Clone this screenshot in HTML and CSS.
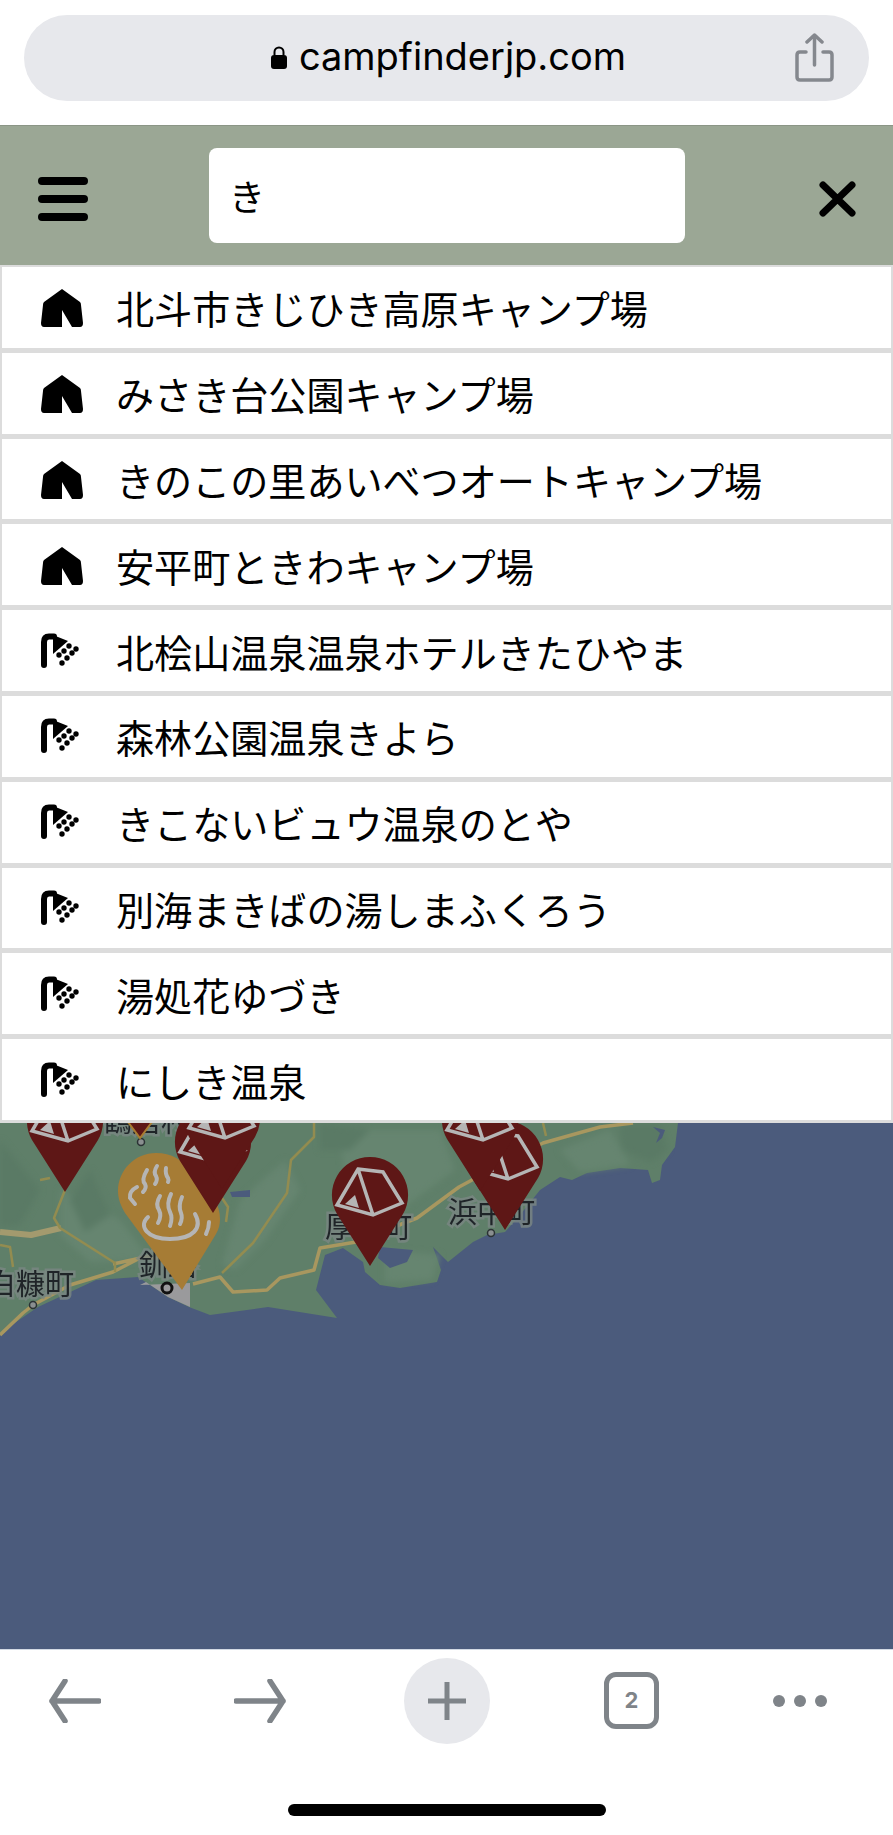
FILE: index.html
```html
<!DOCTYPE html>
<html lang="ja">
<head>
  <meta charset="UTF-8" />
  <meta name="viewport" content="width=device-width, initial-scale=1.0"/>
  <title>campfinderjp.com</title>
  <link rel="stylesheet" href="styles.css">
</head>
<body>

  <!-- shared icons -->
  <svg class="defs" width="0" height="0">
    <symbol id="i-camp" viewBox="0 0 42 38">
      <path d="M21 0 L39 13 Q40 14 40 16 L42 34 Q42 38 39 38 L31 38 L21 21 L21 38 L3 38 Q0 38 0 34 L2 16 Q2 14 3 13 Z"/>
    </symbol>
    <symbol id="i-onsen" viewBox="0 0 42 38">
      <path class="pipe" d="M3 32 V9 Q3 3.5 8 3.5 H13"/>
      <path d="M12 2 L27 8 L12 21 Z"/>
      <circle cx="28" cy="13" r="2.7"/><circle cx="35" cy="16" r="2.7"/>
      <circle cx="23" cy="18" r="2.7"/><circle cx="31" cy="20" r="2.7"/>
      <circle cx="18" cy="22" r="2.7"/><circle cx="26" cy="25" r="2.7"/>
      <circle cx="21" cy="30" r="2.7"/>
    </symbol>
    <symbol id="tent" viewBox="0 0 76 60" overflow="visible">
      <path class="tent-line" d="M21 2 L46 5 L65 36 L36 48 L0 38 Z M21 2 L36 48"/>
      <path class="tent-door" d="M8 37 L18 28 L22 41 Z"/>
    </symbol>
  </svg>

  <!-- browser address bar -->
  <div class="topbar">
    <div class="urlbar">
      <div class="url">
        <svg class="lock" viewBox="0 0 16 23"><path d="M3.5 9 V6 a4.5 4.5 0 0 1 9 0 V9" fill="none" stroke="#000" stroke-width="2"/><rect x="0" y="9" width="16" height="14" rx="3"/></svg>
        <span>campfinderjp.com</span>
      </div>
      <svg class="share" viewBox="0 0 39 49"><path d="M11 19 H5 Q2 19 2 22 V44 Q2 47 5 47 H34 Q37 47 37 44 V22 Q37 19 34 19 H28 M19.5 32 V2 M12 9 L19.5 2 L27 9" fill="none" stroke="#85888e" stroke-width="3.5" stroke-linecap="round" stroke-linejoin="round"/></svg>
    </div>
  </div>

  <!-- site header with search -->
  <header class="header">
    <div class="menu"><span></span><span></span><span></span></div>
    <div class="search">き</div>
    <svg class="close" viewBox="0 0 37 36"><path d="M4 4 L33 32 M33 4 L4 32" stroke="#000" stroke-width="7" stroke-linecap="round"/></svg>
  </header>

  <!-- suggestions -->
  <ul class="results">
    <li><svg class="ico"><use href="#i-camp"/></svg>北斗市きじひき高原キャンプ場</li>
    <li><svg class="ico"><use href="#i-camp"/></svg>みさき台公園キャンプ場</li>
    <li><svg class="ico"><use href="#i-camp"/></svg>きのこの里あいべつオートキャンプ場</li>
    <li><svg class="ico"><use href="#i-camp"/></svg>安平町ときわキャンプ場</li>
    <li><svg class="ico"><use href="#i-onsen"/></svg>北桧山温泉温泉ホテルきたひやま</li>
    <li><svg class="ico"><use href="#i-onsen"/></svg>森林公園温泉きよら</li>
    <li><svg class="ico"><use href="#i-onsen"/></svg>きこないビュウ温泉のとや</li>
    <li><svg class="ico"><use href="#i-onsen"/></svg>別海まきばの湯しまふくろう</li>
    <li><svg class="ico"><use href="#i-onsen"/></svg>湯処花ゆづき</li>
    <li><svg class="ico"><use href="#i-onsen"/></svg>にしき温泉</li>
  </ul>

  <!-- map, coordinates are page pixels -->
  <div class="map">
    <svg viewBox="0 1123 893 526" width="893" height="526">
      <rect class="sea" x="0" y="1123" width="893" height="526"/>

      <path class="land" d="M0 1123 H678 L675 1147 L662 1165 L660 1180 L652 1183 L648 1170 L620 1168 L587 1173 L572 1180 L560 1177 L540 1190 L520 1215 L505 1232 L487 1235 L473 1242 L448 1262 L433 1247 L441 1270 L437 1282 L400 1288 L380 1285 L365 1272 L363 1262 L343 1248 L325 1255 L316 1290 L337 1318 L268 1307 L210 1315 L189 1307 L168 1297 L138 1277 L96 1280 L38 1307 L0 1333 Z"/>
      <g class="patches">
        <path class="land-light" d="M60 1190 L120 1220 L150 1260 L90 1262 L60 1235 Z M240 1200 L285 1160 L300 1190 L265 1240 L235 1270 L222 1265 Z M340 1130 L440 1130 L455 1170 L400 1210 L345 1180 Z M560 1150 L610 1130 L630 1165 L580 1172 Z M385 1250 L440 1255 L432 1280 L385 1282 Z"/>
        <path class="land-dark" d="M0 1140 L40 1190 L20 1225 L0 1228 Z M90 1170 L110 1215 L85 1232 L70 1200 Z M620 1125 L660 1125 L668 1150 L650 1162 L622 1150 Z M320 1123 L370 1130 L350 1150 L320 1150 Z"/>
      </g>
      <path class="sea" d="M380 1247 L413 1250 L407 1262 L390 1268 L378 1258 Z M230 1192 L250 1190 L250 1197 L232 1197 Z M653 1127 L665 1130 L662 1138 L656 1143 L660 1133 Z"/>
      <path class="town" d="M140 1285 L190 1283 L190 1307 L168 1297 L146 1282 Z"/>

      <path class="road" d="M0 1335 L23 1313 L33 1305 L70 1285 L113 1272 L140 1258 L165 1258 M113 1264 L150 1256 M193 1284 L220 1277 L233 1292 L267 1290 L280 1278 L314 1270 L320 1248 L356 1242 L417 1218 L459 1187 L500 1165 L543 1143 L600 1127 L633 1123"/>
      <path class="road-wide" d="M0 1232 L31 1235 L61 1228"/>
      <path class="road-thin" d="M65 1190 L54 1218 L60 1228 L115 1263 L115 1272 M314 1123 L314 1137 L291 1160 L287 1193 L253 1243 L222 1273 M220 1195 L228 1207 L226 1222 M0 1245 L10 1247 L13 1267 M543 1123 L546 1136 M40 1180 L50 1178"/>

      <text class="place" x="-13" y="1295">白糠町</text>
      <text class="place" x="103" y="1132">鶴居村</text>
      <text class="place" x="139" y="1276">釧路</text>
      <text class="place" x="325" y="1238">厚岸町</text>
      <text class="place" x="448" y="1223">浜中町</text>

      <circle class="dot" cx="33" cy="1305" r="3.5"/>
      <circle class="dot" cx="141" cy="1142" r="3.5"/>
      <circle class="dot" cx="491" cy="1233" r="3.5"/>
      <circle class="dot-city" cx="167" cy="1288" r="5"/>

      <!-- pins -->
      <path class="pin-small" d="M128 1122 H152 L140 1138 Z"/>
      <path class="pin-onsen" d="M156 1153 C135 1153 118 1170 118 1191 C118 1199 121 1206 125 1213 L182 1290 L216 1234 C219 1229 220 1224 220 1219 C220 1205 212 1192 200 1186 L190 1172 C184 1160 171 1153 156 1153 Z"/>
      <g class="onsen-mark">
        <path d="M147 1170 Q141 1180 145 1184 Q147 1188 143 1192 M157 1166 Q153 1172 156 1176 Q158 1180 155 1184 M166 1168 Q165 1174 168 1178 Q169 1180 168 1182"/>
        <path d="M137 1187 Q129 1191 130 1198 L135 1204"/>
        <path d="M160 1196 Q155 1204 159 1210 Q162 1216 158 1223 M171 1194 Q166 1204 170 1212 Q173 1218 170 1226 M182 1197 Q178 1206 181 1213 Q183 1218 180 1224"/>
        <path d="M148 1217 C138 1226 147 1239 170 1239 C193 1239 203 1228 195 1214"/>
        <path d="M209 1222 Q209 1228 206 1234"/>
      </g>

      <g class="pin-red">
        <path d="M370 1157 a38 38 0 0 1 33 57 L370 1266 L337 1214 a38 38 0 0 1 33 -57 Z"/>
      </g>
      <use href="#tent" x="337" y="1167" width="76" height="60"/>

      <path class="pin-red" d="M505 1121 a38 38 0 0 1 33 57 L505 1230 L472 1178 a38 38 0 0 1 33 -57 Z"/>
      <use href="#tent" x="472" y="1131" width="76" height="60"/>
      <path class="pin-red" d="M480 1082 a38 38 0 0 1 33 57 L480 1191 L447 1139 a38 38 0 0 1 33 -57 Z"/>
      <use href="#tent" x="447" y="1092" width="76" height="60"/>

      <path class="pin-red" d="M65 1083 a38 38 0 0 1 33 57 L65 1192 L32 1140 a38 38 0 0 1 33 -57 Z"/>
      <use href="#tent" x="32" y="1093" width="76" height="60"/>

      <path class="pin-red" d="M213 1104 a38 38 0 0 1 33 57 L213 1213 L180 1161 a38 38 0 0 1 33 -57 Z"/>
      <use href="#tent" x="180" y="1114" width="76" height="60"/>
      <path class="pin-red" d="M222 1080 a38 38 0 0 1 33 57 L222 1189 L189 1137 a38 38 0 0 1 33 -57 Z"/>
      <use href="#tent" x="189" y="1090" width="76" height="60"/>
    </svg>
  </div>

  <!-- browser toolbar -->
  <footer class="toolbar">
    <div class="tools">
      <svg class="tool-arrow" viewBox="0 0 52 44"><path d="M50 22 H3 M3 22 L16 2 M3 22 L16 42"/></svg>
      <svg class="tool-arrow" viewBox="0 0 52 44"><path d="M2 22 H49 M49 22 L36 2 M49 22 L36 42"/></svg>
      <div class="plus">
        <svg viewBox="0 0 38 38"><path d="M0 19 H38 M19 0 V38"/></svg>
      </div>
      <div class="tabs">2</div>
      <div class="dots"><span></span><span></span><span></span></div>
    </div>
    <div class="home"></div>
  </footer>

</body>
</html>
```

FILE: styles.css
```css
* {
  box-sizing: border-box;
}
body {
  margin: 0;
  width: 893px;
  height: 1835px;
  overflow: hidden;
  display: flex;
  flex-direction: column;
  background-color: #fff;
  font-family: "Noto Sans CJK JP", "Noto Sans", sans-serif;
  color: #000;
}
.defs {
  position: absolute;
}

/* address bar */
.topbar {
  height: 125px;
  padding: 15px 24px 0;
}
.urlbar {
  position: relative;
  height: 86px;
  border-radius: 43px;
  background-color: #e7e8ec;
  display: flex;
  align-items: center;
  justify-content: center;
}
.url {
  display: flex;
  align-items: center;
  gap: 12px;
  font-family: Inter, "Noto Sans", sans-serif;
  font-size: 38px;
  line-height: 44px;
  margin: -4px 0 0 4px;
}
.lock {
  width: 16px;
  height: 23px;
  margin-top: 3px;
}
.share {
  position: absolute;
  right: 35px;
  top: 18px;
  width: 39px;
  height: 49px;
}

/* site header */
.header {
  height: 140px;
  background-color: #9ba795;
  border-top: 1px solid #8b9586;
  display: flex;
  align-items: flex-start;
}
.menu {
  margin: 51px 0 0 38px;
  width: 50px;
  display: flex;
  flex-direction: column;
  gap: 10px;
}
.menu span {
  height: 8px;
  border-radius: 4px;
  background-color: #000;
}
.search {
  margin: 22px 0 0 121px;
  width: 476px;
  height: 95px;
  border-radius: 8px;
  background-color: #fff;
  padding-left: 20px;
  font-size: 36px;
  line-height: 94px;
}
.close {
  margin: 55px 0 0 134px;
  width: 37px;
  height: 36px;
}

/* suggestions */
.results {
  list-style: none;
  margin: 0;
  padding: 2px 2px 3px;
  background-color: #dcdcdc;
  display: flex;
  flex-direction: column;
  gap: 5px;
}
.results li {
  height: 80.8px;
  background-color: #fff;
  display: flex;
  align-items: center;
  gap: 33px;
  padding: 2px 0 0 39px;
  font-size: 38.1px;
  line-height: 78px;
  white-space: nowrap;
}
.ico {
  width: 42px;
  height: 38px;
  flex: none;
}
.pipe {
  fill: none;
  stroke: #000;
  stroke-width: 6;
  stroke-linecap: round;
}

/* map */
.map {
  height: 526px;
  overflow: hidden;
}
.map svg {
  display: block;
  filter: blur(0.5px);
}
.patches {
  filter: blur(3px);
}
.sea {
  fill: #4b5b7c;
}
.land {
  fill: #5f7f69;
}
.land-light {
  fill: #668570;
}
.land-dark {
  fill: #5a7a65;
}
.town {
  fill: #9a9a9c;
}
.road,
.road-wide,
.road-thin {
  fill: none;
  stroke-linejoin: round;
}
.road {
  stroke: #a8975f;
  stroke-width: 3.5;
}
.road-wide {
  stroke: #a39a6e;
  stroke-width: 6;
}
.road-thin {
  stroke: #938c50;
  stroke-width: 2.5;
}
.place {
  font-size: 29px;
  fill: #1f2428;
  stroke: #7b8783;
  stroke-width: 5px;
  stroke-opacity: 0.8;
  paint-order: stroke;
}
.dot {
  fill: #8a8f90;
  stroke: #2b3234;
  stroke-width: 1.5;
}
.dot-city {
  fill: none;
  stroke: #111;
  stroke-width: 3;
}
.pin-red {
  fill: #5e1716;
}
.pin-small {
  fill: #5e1716;
  stroke: #a97c30;
  stroke-width: 2;
}
.pin-onsen {
  fill: #a67c35;
}
.onsen-mark path {
  fill: none;
  stroke: #b5b5b5;
  stroke-width: 4;
  stroke-linecap: round;
}
.tent-line {
  fill: none;
  stroke: #b5b5b5;
  stroke-width: 3.5;
  stroke-linejoin: miter;
}
.tent-door {
  fill: #b5b5b5;
}

/* bottom toolbar */
.toolbar {
  flex: 1;
  border-top: 1px solid #d3dae4;
  background-color: #fff;
  display: flex;
  flex-direction: column;
  align-items: center;
}
.tools {
  width: 100%;
  height: 94px;
  margin-top: 4px;
  padding-left: 49px;
  display: flex;
  align-items: center;
}
.tool-arrow {
  width: 52px;
  height: 44px;
  margin-right: 133px;
  flex: none;
}
.tool-arrow path {
  fill: none;
  stroke: #7f8489;
  stroke-width: 5.5;
  stroke-linecap: round;
  stroke-linejoin: round;
}
.plus {
  width: 86px;
  height: 86px;
  margin-left: -15px;
  border-radius: 50%;
  background-color: #e7e8ec;
  display: flex;
  align-items: center;
  justify-content: center;
}
.plus svg {
  width: 38px;
  height: 38px;
}
.plus path {
  stroke: #7f8489;
  stroke-width: 5;
  stroke-linecap: round;
}
.tabs {
  width: 55px;
  height: 57px;
  margin-left: 114px;
  border: 5px solid #7f8489;
  border-radius: 12px;
  font-family: Inter, sans-serif;
  font-size: 22px;
  font-weight: 700;
  line-height: 47px;
  text-align: center;
  color: #7f8489;
}
.dots {
  margin-left: 114px;
  display: flex;
  gap: 9px;
}
.dots span {
  width: 12px;
  height: 12px;
  border-radius: 50%;
  background-color: #7f8489;
}
.home {
  width: 318px;
  height: 12px;
  margin-top: 56px;
  border-radius: 6px;
  background-color: #000;
}
```
